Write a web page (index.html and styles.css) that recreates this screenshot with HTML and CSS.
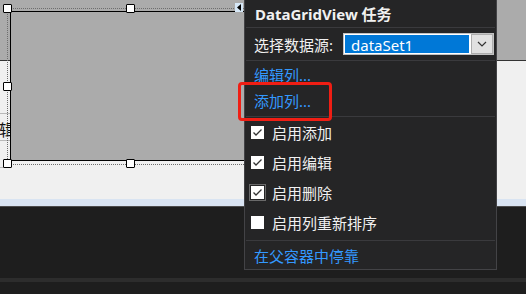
FILE: index.html
```html
<!DOCTYPE html>
<html lang="zh-CN">
<head>
  <meta charset="UTF-8" />
  <title>DataGridView 任务</title>
  <link rel="stylesheet" href="styles.css">
</head>
<body>
  <div class="screen">
    <div class="designer">
      <div class="backdrop"></div>
      <div class="side-grid">
        <div class="side-row"></div>
        <div class="side-row"><span class="side-text">编辑</span></div>
        <div class="side-row"></div>
      </div>
      <div class="dgv"></div>
      <div class="selection"></div>
      <span class="handle h-tl"></span>
      <span class="handle h-tm"></span>
      <span class="handle h-ml"></span>
      <span class="handle h-bl"></span>
      <span class="handle h-bm"></span>
      <span class="smart-tag">
        <svg width="8" height="9" viewBox="0 0 8 9"><polygon points="2,4.5 6,1 6,8" fill="#000"/></svg>
      </span>
    </div>
    <div class="status-strip"></div>
    <div class="dark-area"></div>
    <div class="bottom-bar"></div>
  </div>

  <div class="tasks">
    <div class="tasks-title">DataGridView 任务</div>
    <div class="sep"></div>
    <div class="row source-row">
      <span>选择数据源:</span>
      <div class="combo">
        <span class="combo-value">dataSet1</span>
        <span class="combo-btn">
          <svg width="10" height="6" viewBox="0 0 10 6"><polyline points="1,1 5,5 9,1" fill="none" stroke="#333" stroke-width="1.2"/></svg>
        </span>
      </div>
    </div>
    <div class="sep"></div>
    <div class="links">
      <div class="row link">编辑列...</div>
      <div class="row link">添加列...</div>
      <div class="highlight"></div>
    </div>
    <div class="sep"></div>
    <div class="checks">
      <label class="row check"><span class="box on"><svg width="13" height="13" viewBox="0 0 13 13"><polyline points="2.5,6.5 5,9 10.5,3.5" fill="none" stroke="#333" stroke-width="1.3"/></svg></span>启用添加</label>
      <label class="row check"><span class="box on"><svg width="13" height="13" viewBox="0 0 13 13"><polyline points="2.5,6.5 5,9 10.5,3.5" fill="none" stroke="#333" stroke-width="1.3"/></svg></span>启用编辑</label>
      <label class="row check"><span class="box on focus"><svg width="13" height="13" viewBox="0 0 13 13"><polyline points="2.5,6.5 5,9 10.5,3.5" fill="none" stroke="#333" stroke-width="1.3"/></svg></span>启用删除</label>
      <label class="row check"><span class="box"></span>启用列重新排序</label>
    </div>
    <div class="sep"></div>
    <div class="row link dock">在父容器中停靠</div>
  </div>
</body>
</html>
```

FILE: styles.css
```css
body {
  margin: 0;
  padding: 0;
  background-color: #1e1e1e;
  font-family: "Noto Sans", "Noto Sans CJK SC", sans-serif;
  font-size: 15px;
  overflow: hidden;
}

.screen {
  width: 526px;
  height: 294px;
  display: flex;
  flex-direction: column;
}

/* form designer surface */
.designer {
  height: 199px;
  background-color: #f0f0f0;
  position: relative;
  overflow: hidden;
}

.backdrop {
  height: 60px;
  background-color: #ababab;
  border-bottom: 1px solid #333;
}

.side-grid {
  width: 10px;
  overflow: hidden;
  padding-top: 0;
}

.side-row {
  height: 26px;
  border-bottom: 1px solid #b9b9b9;
  position: relative;
}

.side-row:first-child {
  height: 52px;
}

.side-text {
  position: absolute;
  right: -5px;
  top: 3px;
  color: #111;
  font-size: 16px;
  white-space: nowrap;
}

.dgv {
  position: absolute;
  left: 10px;
  top: 11px;
  width: 300px;
  height: 148px;
  background-color: #ababab;
  border: 1px solid #000;
  border-right: none;
}

.selection {
  position: absolute;
  left: 7px;
  top: 8px;
  width: 300px;
  height: 155px;
  border: 1px dotted #6e6e6e;
  border-right: none;
}

.handle {
  position: absolute;
  width: 7px;
  height: 7px;
  background: #fff;
  border: 1px solid #000;
  border-radius: 1px;
}

.h-tl { left: 3px; top: 4px; }
.h-tm { left: 126px; top: 4px; }
.h-ml { left: 3px; top: 82px; }
.h-bl { left: 3px; top: 159px; }
.h-bm { left: 126px; top: 159px; }

.smart-tag {
  position: absolute;
  left: 235px;
  top: 3px;
  width: 8px;
  height: 9px;
  background-color: #d6e8f8;
  display: flex;
}

.status-strip {
  height: 7px;
  background-color: #d9e4f2;
  border-bottom: 1px solid #4c4c4c;
}

.dark-area {
  height: 71px;
  background-color: #1e1e1e;
}

.bottom-bar {
  height: 4px;
  background-color: #2d2d2d;
}

/* smart tag panel */
.tasks {
  position: absolute;
  left: 244px;
  top: -1px;
  width: 251px;
  height: 269px;
  background-color: #252526;
  border: 1px solid #434346;
  color: #f1f1f1;
  display: flex;
  flex-direction: column;
}

.tasks-title {
  height: 26px;
  line-height: 26px;
  padding-left: 10px;
  font-weight: bold;
  margin-top: 1px;
}

.sep {
  height: 1px;
  margin: 0 1px;
  background-color: #3a3a3d;
}

.row {
  display: flex;
  align-items: center;
  padding-left: 9px;
}

.source-row {
  height: 33px;
  gap: 10px;
}

.combo {
  width: 149px;
  height: 20px;
  border: 1px solid #c2c2c2;
  background-color: #fff;
  display: flex;
  padding: 0;
}

.combo-value {
  flex: 1;
  background-color: #0078d7;
  color: #fff;
  padding-left: 6px;
  line-height: 20px;
  border: 1px solid #fff;
}

.combo-btn {
  width: 20px;
  background-color: #e1e1e1;
  border: 1px solid #adadad;
  margin-left: 1px;
  display: flex;
  align-items: center;
  justify-content: center;
}

.links {
  position: relative;
  padding-bottom: 3px;
}

.link {
  height: 26px;
  color: #3399ff;
}

.highlight {
  position: absolute;
  left: -7px;
  top: 21px;
  width: 88px;
  height: 33px;
  border: 3px solid #f01e14;
  border-radius: 4px;
}

.checks {
  padding-bottom: 3px;
}

.check {
  height: 30px;
  gap: 8px;
  padding-left: 6px;
}

.box {
  width: 13px;
  height: 13px;
  background-color: #fff;
  display: flex;
}

.box.focus {
  outline: 1px solid #6a6a6a;
  outline-offset: 1px;
}

.dock {
  height: 28px;
}
```
